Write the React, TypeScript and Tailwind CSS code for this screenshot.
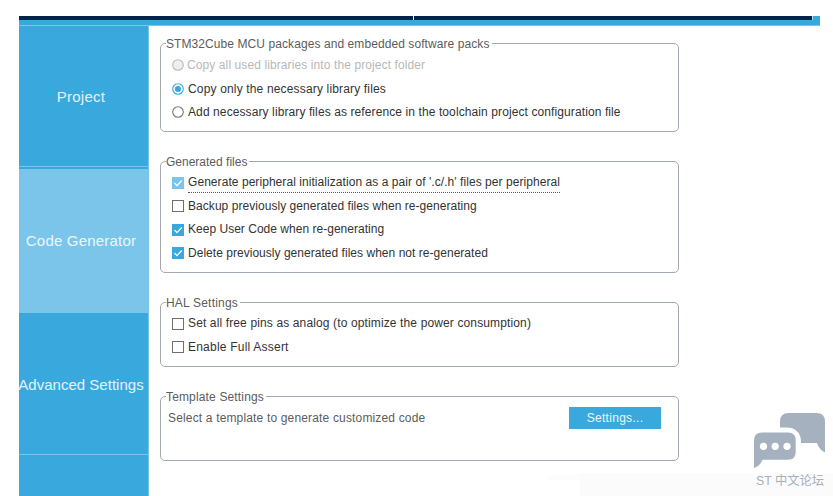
import { useState } from "react";
import type { ReactNode } from "react";
import clsx from "clsx";

const TABS = [
  { name: "Project", box: "h-[141px] border-b border-[#7ac5e9] pt-[3px]", label: "tracking-[0.25px]" },
  { name: "Code Generator", box: "mt-0.5 h-[144px]", label: "tracking-[0.2px]" },
  { name: "Advanced Settings", box: "h-[142px] border-b border-[#7ac5e9] pt-1", label: "tracking-[0.02px]" },
];

const LIBRARY_OPTIONS = [
  { label: "Copy all used libraries into the project folder", disabled: true, spacing: "tracking-[0.1px] -ml-px" },
  { label: "Copy only the necessary library files", disabled: false, spacing: "tracking-[0.16px]" },
  {
    label: "Add necessary library files as reference in the toolchain project configuration file",
    disabled: false,
    spacing: "tracking-[0.1px]",
  },
];

const FILE_OPTIONS = [
  {
    label: "Generate peripheral initialization as a pair of '.c/.h' files per peripheral",
    checked: true,
    focused: true,
    spacing: "tracking-[0.06px]",
  },
  { label: "Backup previously generated files when re-generating", checked: false, spacing: "tracking-[0.05px]" },
  { label: "Keep User Code when re-generating", checked: true, spacing: "tracking-[0.02px]" },
  { label: "Delete previously generated files when not re-generated", checked: true, spacing: "tracking-[0.03px]" },
];

const HAL_OPTIONS = [
  {
    label: "Set all free pins as analog (to optimize the power consumption)",
    checked: false,
    spacing: "tracking-[0.13px]",
  },
  { label: "Enable Full Assert", checked: false, spacing: "tracking-[0.22px]" },
];

interface GroupProps {
  title: string;
  className: string;
  legendClass?: string;
  children: ReactNode;
}

function Group({ title, className, legendClass, children }: GroupProps) {
  return (
    <fieldset className={clsx("w-[519px] rounded-[5px] border border-[#a3a9b0] pl-[5px]", className)}>
      <legend className={clsx("h-[15px] pr-0.5 leading-4 text-[#5c5c5c]", legendClass)}>{title}</legend>
      {children}
    </fieldset>
  );
}

interface CheckRowProps {
  label: string;
  checked: boolean;
  focused?: boolean;
  spacing: string;
}

function CheckRow({ label, checked: initial, focused, spacing }: CheckRowProps) {
  const [checked, setChecked] = useState(initial);

  return (
    <button
      type="button"
      role="checkbox"
      aria-checked={checked}
      onClick={() => setChecked(!checked)}
      className="flex h-[23.5px] items-center pl-1.5 text-left"
    >
      <svg width="12" height="12" viewBox="0 0 12 12" className="mr-1 shrink-0">
        {checked ? (
          <>
            <rect width="12" height="12" fill={focused ? "#7ac5e9" : "#39a8dc"} />
            <path d="M2.5 6 L5 8.6 L9.7 3.5" fill="none" stroke="#fff" strokeWidth="1.2" />
          </>
        ) : (
          <rect x="0.5" y="0.5" width="11" height="11" fill="#fff" stroke="#6e6e6e" />
        )}
      </svg>
      <span className={clsx("relative whitespace-nowrap leading-[15px]", spacing)}>
        {label}
        {focused && (
          <span className="absolute inset-x-0 -bottom-[3px] border-b border-dotted border-[#555]" />
        )}
      </span>
    </button>
  );
}

function RadioMark({ selected, disabled }: { selected: boolean; disabled: boolean }) {
  return (
    <svg width="12" height="12" viewBox="0 0 12 12" className="mr-1 shrink-0">
      <circle
        cx="6"
        cy="6"
        r="5.3"
        fill={disabled ? "#efefef" : "#fff"}
        stroke={selected ? "#39a8dc" : disabled ? "#bcbcbc" : "#777"}
        strokeWidth="1.1"
      />
      {selected && <circle cx="6" cy="6" r="3" fill="#39a8dc" />}
    </svg>
  );
}

function ForumMark() {
  return (
    <div className="absolute left-[754px] top-[413px] w-[72px] text-[#a6b1c0]">
      <svg width="71" height="56" viewBox="0 0 71 56" fill="currentColor">
        <path d="M26 14.5V8.5q0-8.5 8.5-8.5h28q8.5 0 8.5 8.5v31q-6-3-8-9.5H47v-2Q46 14.5 32 14.5z" />
        <path d="M8 19.5h26q7.7 0 7.7 7.7v11.8q0 7.7-7.7 7.7H8.5Q6 53 0 55V27.5q0-8 8-8z" />
        <circle cx="9.5" cy="33.3" r="3.6" fill="#fff" />
        <circle cx="21.2" cy="33.3" r="3.6" fill="#fff" />
        <circle cx="33" cy="33.3" r="3.6" fill="#fff" />
      </svg>
      <div className="ml-0.5 mt-0.5 whitespace-nowrap font-['Liberation_Sans','Noto_Sans_CJK_SC',sans-serif] text-[12.3px] leading-[20px]">
        ST 中文论坛
      </div>
    </div>
  );
}

export default function App() {
  const [tab, setTab] = useState("Code Generator");
  const [library, setLibrary] = useState(1);

  return (
    <div className="relative h-[496px] w-[833px] overflow-hidden bg-white pl-[19px] pt-4 font-['Liberation_Sans',Arial,sans-serif] text-[12px] text-[#333]">
      <header className="w-[801px] border-b border-[#7ac5e9] bg-[#39a8dc] pb-[5px]">
        <div className="flex h-1 w-[794px] border-r border-[#b9d5e6]">
          <div className="w-[395px] border-r border-white bg-[#03234b]" />
          <div className="flex-1 bg-[#03234b]" />
        </div>
      </header>

      <div className="flex">
        <nav className="flex h-[470px] w-[130px] flex-col border-r border-[#7ac5e9] bg-[#39a8dc]">
          {TABS.map((item) => (
            <button
              key={item.name}
              type="button"
              onClick={() => setTab(item.name)}
              className={clsx(
                "flex items-center justify-center overflow-hidden whitespace-nowrap pr-[5px] text-[15px] text-white/85",
                item.box,
                tab === item.name && "bg-[#7ac5e9]",
              )}
            >
              <span className={item.label}>{item.name}</span>
            </button>
          ))}
        </nav>

        <main className="flex flex-col gap-[22px] pl-[11px] pt-2.5">
          <Group title="STM32Cube MCU packages and embedded software packs" className="h-24" legendClass="tracking-[0.08px]">
            <div role="radiogroup" className="flex flex-col pt-0.5">
              {LIBRARY_OPTIONS.map((option, index) => (
                <button
                  key={option.label}
                  type="button"
                  role="radio"
                  aria-checked={library === index}
                  disabled={option.disabled}
                  onClick={() => setLibrary(index)}
                  className="flex h-[23.7px] items-center pl-1.5 text-left disabled:text-[#b8b8b8]"
                >
                  <RadioMark selected={library === index} disabled={option.disabled} />
                  <span className={clsx("whitespace-nowrap", option.spacing)}>{option.label}</span>
                </button>
              ))}
            </div>
          </Group>

          <Group title="Generated files" className="h-[119px]" legendClass="tracking-[0px]">
            <div className="pt-0.5">
              {FILE_OPTIONS.map((option) => (
                <CheckRow key={option.label} {...option} />
              ))}
            </div>
          </Group>

          <Group title="HAL Settings" className="h-[72px]" legendClass="tracking-[0.2px]">
            <div className="pt-0.5">
              {HAL_OPTIONS.map((option) => (
                <CheckRow key={option.label} {...option} />
              ))}
            </div>
          </Group>

          <Group title="Template Settings" className="h-[72px]" legendClass="tracking-[0.15px]">
            <div className="flex items-center justify-between pl-0.5 pr-[17px] pt-[3px] text-[#5c5c5c]">
              <span className="tracking-[0.16px]">Select a template to generate customized code</span>
              <button type="button" className="h-[22px] w-[92px] bg-[#39a8dc] tracking-[0.3px] text-white/90">
                Settings...
              </button>
            </div>
          </Group>
        </main>
      </div>

      <div className="absolute bottom-0 left-[580px] right-0 h-[22px] bg-[#fbfbfb]" />
      <div className="absolute left-[548px] top-[474px] h-1.5 w-8 rounded-tl-md bg-[#fcfcfc]" />
      <ForumMark />
    </div>
  );
}
